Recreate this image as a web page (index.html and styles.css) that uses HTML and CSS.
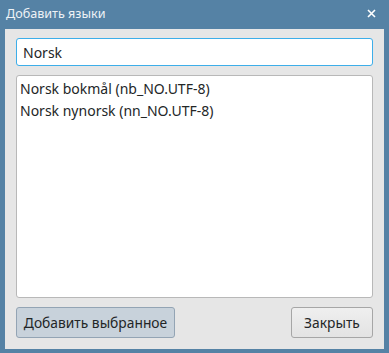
FILE: index.html
```html
<!DOCTYPE html>
<html>
<head>
<meta charset="utf-8">
<link rel="stylesheet" href="styles.css">
</head>
<body>
<div class="window">
  <div class="titlebar">
    <span class="title">Добавить языки</span>
    <svg class="close" width="9" height="9" viewBox="0 0 9 9"><path d="M1 1L8 8M8 1L1 8" stroke="#ffffff" stroke-width="1.6"/></svg>
  </div>
  <div class="content">
    <div class="search">Norsk</div>
    <div class="list">
      <div class="item">Norsk bokmål (nb_NO.UTF-8)</div>
      <div class="item">Norsk nynorsk (nn_NO.UTF-8)</div>
    </div>
    <div class="buttons">
      <button class="btn primary">Добавить выбранное</button>
      <button class="btn">Закрыть</button>
    </div>
  </div>
</div>
</body>
</html>
```
FILE: styles.css
```css
html, body { margin: 0; padding: 0; }
body { width: 389px; height: 353px; font-family: "Noto Sans", sans-serif; font-size: 14px; color: #232627; }
.window { width: 389px; height: 353px; box-sizing: border-box; background: #5582a5; padding: 0 5px 4px 5px; display: flex; flex-direction: column; }
.titlebar { height: 29px; display: flex; align-items: center; justify-content: space-between; color: #eef2f6; padding: 0 8px 0 1px; }
.title { font-size: 12.6px; position: relative; top: -1px; }
.close { margin-top: -2px; }
.content { flex: 1; background: #e6e6e6; padding: 9px 11px 11px 11px; display: flex; flex-direction: column; }
.search { height: 28px; box-sizing: border-box; border: 1px solid #3daee9; border-radius: 3px; background: #fff; padding: 0 6px; display: flex; align-items: center; }
.list { margin-top: 9px; height: 223px; box-sizing: border-box; border: 1px solid #b8b8b8; border-radius: 3px; background: #fff; padding: 2px 3px; }
.item { height: 22px; line-height: 22px; }
.buttons { margin-top: 9px; display: flex; justify-content: space-between; }
.btn { font-family: "Noto Sans", sans-serif; font-size: 13.8px; color: #232627; height: 31px; box-sizing: border-box; border: 1px solid #a6a6a6; border-radius: 3px; background: linear-gradient(#efefef, #e3e3e3); padding: 0; white-space: nowrap; text-align: center; }
.btn.primary { background: #c8d2db; border-color: #93a4b4; width: 159px; }
.btn:last-child { width: 82px; }
```
